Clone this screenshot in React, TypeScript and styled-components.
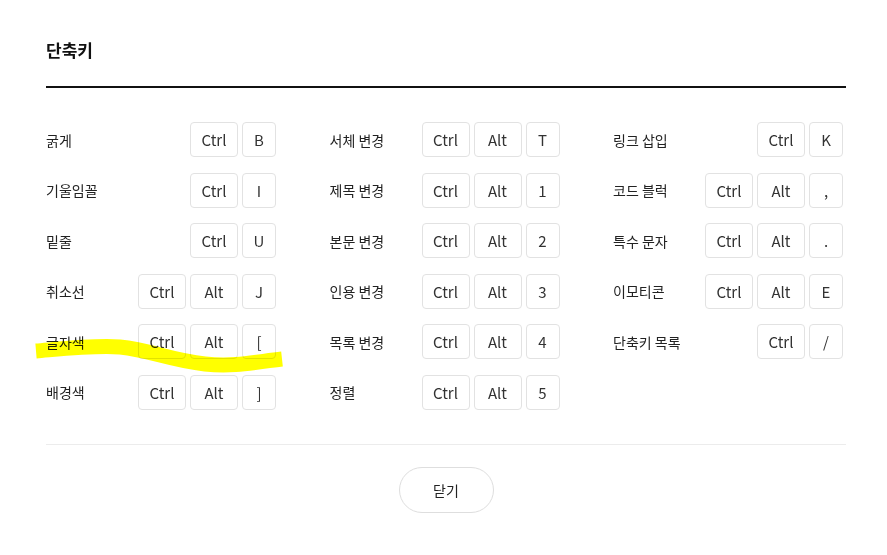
import React from 'react';
import styled, { createGlobalStyle } from 'styled-components';

const GlobalStyle = createGlobalStyle`
  html, body {
    margin: 0;
    padding: 0;
    background: #fff;
  }
  body {
    font-family: "Noto Sans CJK KR", "Noto Sans", sans-serif;
    color: #222;
  }
`;

const Page = styled.div`
  position: relative;
  width: 887px;
  height: 555px;
  box-sizing: border-box;
  padding: 38px 41px 0 46px;
`;

const Header = styled.div`
  padding-bottom: 24px;
  border-bottom: 2px solid #111;
`;

const Title = styled.h2`
  margin: 0;
  font-size: 17px;
  line-height: 24px;
  font-weight: 700;
  color: #111;
`;

const Grid = styled.div`
  display: grid;
  grid-template-columns: repeat(3, 230px);
  grid-template-rows: repeat(6, 35px);
  grid-auto-flow: column;
  column-gap: 53.5px;
  row-gap: 15.5px;
  margin-top: 34px;
`;

const Item = styled.div`
  display: flex;
  align-items: center;
  justify-content: space-between;
`;

const Label = styled.span`
  font-size: 14px;
  color: #222;
  white-space: nowrap;
`;

const Keys = styled.div`
  display: flex;
  gap: 4px;
`;

const Key = styled.kbd<{ $wide: boolean }>`
  display: flex;
  align-items: center;
  justify-content: center;
  box-sizing: border-box;
  width: ${p => (p.$wide ? '48px' : '34px')};
  height: 35px;
  border: 1px solid #e2e2e2;
  border-radius: 4px;
  font-family: "Noto Sans CJK KR", "Noto Sans", sans-serif;
  font-size: 15px;
  color: #333;
  background: #fff;
`;

const Divider = styled.hr`
  margin: 34px 0 0;
  border: none;
  border-top: 1px solid #ececec;
`;

const Footer = styled.div`
  display: flex;
  justify-content: center;
  padding-top: 22px;
`;

const CloseButton = styled.button`
  width: 95px;
  height: 46px;
  border: 1px solid #dedede;
  border-radius: 23px;
  background: #fff;
  font-family: "Noto Sans CJK KR", "Noto Sans", sans-serif;
  font-size: 14px;
  color: #222;
  cursor: pointer;
`;

const Highlight = styled.svg`
  position: absolute;
  left: 0;
  top: 0;
  pointer-events: none;
  mix-blend-mode: multiply;
`;

type Shortcut = { label: string; keys: string[] };

const SHORTCUTS: Shortcut[] = [
  { label: '굵게', keys: ['Ctrl', 'B'] },
  { label: '기울임꼴', keys: ['Ctrl', 'I'] },
  { label: '밑줄', keys: ['Ctrl', 'U'] },
  { label: '취소선', keys: ['Ctrl', 'Alt', 'J'] },
  { label: '글자색', keys: ['Ctrl', 'Alt', '['] },
  { label: '배경색', keys: ['Ctrl', 'Alt', ']'] },
  { label: '서체 변경', keys: ['Ctrl', 'Alt', 'T'] },
  { label: '제목 변경', keys: ['Ctrl', 'Alt', '1'] },
  { label: '본문 변경', keys: ['Ctrl', 'Alt', '2'] },
  { label: '인용 변경', keys: ['Ctrl', 'Alt', '3'] },
  { label: '목록 변경', keys: ['Ctrl', 'Alt', '4'] },
  { label: '정렬', keys: ['Ctrl', 'Alt', '5'] },
  { label: '링크 삽입', keys: ['Ctrl', 'K'] },
  { label: '코드 블럭', keys: ['Ctrl', 'Alt', ','] },
  { label: '특수 문자', keys: ['Ctrl', 'Alt', '.'] },
  { label: '이모티콘', keys: ['Ctrl', 'Alt', 'E'] },
  { label: '단축키 목록', keys: ['Ctrl', '/'] },
];

const App: React.FC = () => {
  return (
    <>
      <GlobalStyle />
      <Page>
        <Header>
          <Title>단축키</Title>
        </Header>

        <Grid>
          {SHORTCUTS.map(s => (
            <Item key={s.label}>
              <Label>{s.label}</Label>
              <Keys>
                {s.keys.map(k => (
                  <Key key={k} $wide={k.length > 1}>{k}</Key>
                ))}
              </Keys>
            </Item>
          ))}
        </Grid>

        <Divider />
        <Footer>
          <CloseButton>닫기</CloseButton>
        </Footer>

        {/* yellow marker stroke drawn over the screenshot */}
        <Highlight width="887" height="555" viewBox="0 0 887 555">
          <path
            d="M36 351 C 60 349, 95 345, 120 347 C 150 350, 170 360, 205 364 C 235 367, 255 362, 282 359"
            fill="none"
            stroke="#ffff00"
            strokeWidth="15"
          />
        </Highlight>
      </Page>
    </>
  );
};

export default App;
